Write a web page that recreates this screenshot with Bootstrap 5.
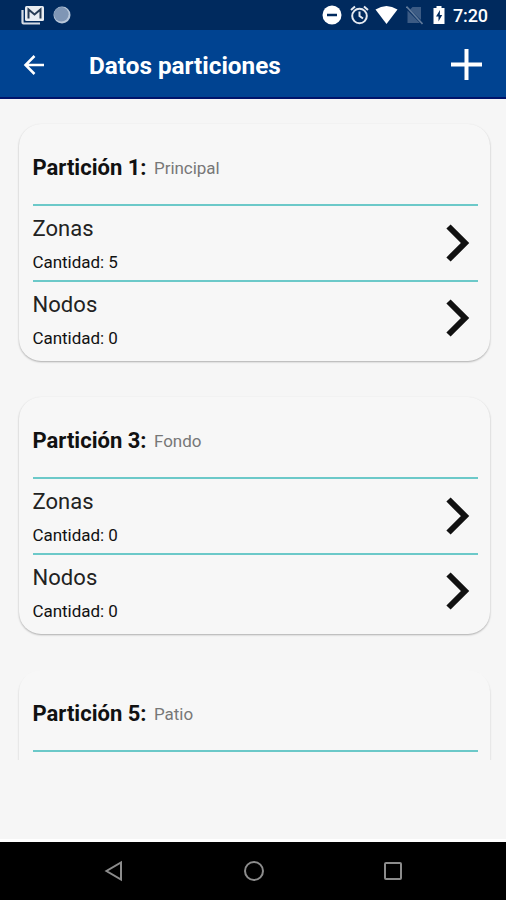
<!DOCTYPE html>
<html lang="es">
<head>
<meta charset="utf-8">
<meta name="viewport" content="width=device-width, initial-scale=1">
<title>Datos particiones</title>
<link href="https://cdn.jsdelivr.net/npm/bootstrap@5.3.0/dist/css/bootstrap.min.css" rel="stylesheet">
<style>
body{font-family:Roboto,"Liberation Sans",sans-serif;background:#f6f6f6;color:#111}
.screen{height:900px}
svg{display:block;flex:none}
.status{height:30px;background:#002a5e;padding:0 18px 0 21px}
.clock{font-size:18px;font-weight:500;line-height:30px;letter-spacing:-.1px;margin-left:8px;padding-top:2px}
.signal{margin-left:6px}
.battery{margin-left:10px}
.topbar{height:69px;background:#004391;border-bottom:2px solid #00146b;padding:2px 24px 0 23px}
.title{font-size:24.3px;font-weight:700;line-height:30px;margin-left:44px;padding-top:3px}
.partitions{height:661px;padding:25px 16px 0 19px}
.partition{height:237px;margin-bottom:36px;padding:0 12px 5px 14px;border-radius:22px;background:#f7f7f7;border:0;box-shadow:0 1px 2px rgba(0,0,0,.3)}
.partition-head{height:80px;padding-top:7px;margin-left:-.5px}
.partition-name{font-size:22px;font-weight:700;line-height:30px}
.partition-label{font-size:17px;color:#777;line-height:30px;margin-left:7.500px;letter-spacing:-.05px}
.partition-faint{box-shadow:0 2px 2px rgba(0,0,0,.22)}
.entry{height:75.5px;border-top:2px solid #6cc9c9;padding-right:7px}
.entry-name{font-size:22px;line-height:30px;padding-top:8px;letter-spacing:.05px;color:#222;margin-left:-.5px}
.entry-count{font-size:17px;line-height:24px;margin-top:6px;letter-spacing:-.05px;margin-left:-.5px}
.navkeys{height:61px;background:#000;padding:0 103px 0 104px;border-top:3px solid #fff}
</style>
<script src="https://cdn.jsdelivr.net/npm/bootstrap@5.3.0/dist/js/bootstrap.bundle.min.js"></script>
</head>
<body>
<div class="screen d-flex flex-column overflow-hidden">
  <div class="status d-flex align-items-center text-white">
    <svg width="24" height="20" viewBox="0 0 24 20"><path d="M1.500 5v12.500q0 1 1 1H19" fill="none" stroke="#d5dce5" stroke-width="2.200"/><rect x="4" y="1" width="19" height="15" rx="1.500" fill="#e9edf2"/><path d="M7.500 13.500V4.500l6 5 6-5v9" fill="none" stroke="#283c55" stroke-width="2"/></svg>
    <svg class="ms-2" width="18" height="18" viewBox="0 0 18 18"><circle cx="9" cy="9" r="8.500" fill="#b9c8da"/><circle cx="8.300" cy="8.300" r="7.300" fill="#7f96b5"/></svg>
    <svg class="ms-auto" width="20" height="20" viewBox="0 0 20 20"><circle cx="10" cy="10" r="9.500" fill="#fff"/><path d="M5 10h10" stroke="#002a5e" stroke-width="2.500"/></svg>
    <svg class="ms-2" width="19" height="20" viewBox="0 0 19 20"><g fill="none" stroke="#e5eaf1" stroke-width="2"><circle cx="9.500" cy="11" r="7.300"/><path d="M9.500 6.500V11l3.500 2.500M1 5l4-3.500M18 5l-4-3.500"/></g></svg>
    <svg class="signal" width="23" height="20" viewBox="0 0 23 20"><path d="M.5 4.500Q11.500-2.500 22.500 4.500L11.500 19Z" fill="#fff"/></svg>
    <svg class="ms-2" width="17" height="20" viewBox="0 0 17 20"><path d="M6.500 2H15v13L4 4.500ZM1.500 5.500 14 18H1.500Z" fill="#3c5b84"/><path d="M.5 1.500 16.500 19" stroke="#627b9b" stroke-width="1.600"/></svg>
    <svg class="battery" width="12" height="20" viewBox="0 0 12 20"><path d="M3.500 1h5v2H11.500v16H.5V3h3Z" fill="#fff"/><path d="M7 5 3 11.500h2.500V16.500L9.200 10H6.800Z" fill="#002a5e"/></svg>
    <span class="clock">7:20</span>
  </div>
  <header class="topbar d-flex align-items-center text-white">
    <svg width="22" height="20" viewBox="0 0 22 20"><path d="M21 10H2.500M11.500 1 2.500 10l9 9" fill="none" stroke="#fff" stroke-width="2.500"/></svg>
    <h1 class="title mb-0">Datos particiones</h1>
    <svg class="ms-auto" width="31" height="31" viewBox="0 0 31 31"><path d="M0 15.500h31M15.500 0v31" stroke="#fff" stroke-width="4"/></svg>
  </header>
  <main class="partitions overflow-hidden">
    <section class="card partition">
      <div class="partition-head d-flex align-items-center"><span class="partition-name">Partición 1:</span><span class="partition-label">Principal</span></div>
      <div class="entry d-flex align-items-center justify-content-between">
        <div class="h-100"><div class="entry-name">Zonas</div><div class="entry-count">Cantidad: 5</div></div>
        <svg width="26" height="38" viewBox="0 0 26 38"><path d="M3.500 2.500 20 19 3.500 35.500" fill="none" stroke="#111" stroke-width="6"/></svg>
      </div>
      <div class="entry d-flex align-items-center justify-content-between">
        <div class="h-100"><div class="entry-name">Nodos</div><div class="entry-count">Cantidad: 0</div></div>
        <svg width="26" height="38" viewBox="0 0 26 38"><path d="M3.500 2.500 20 19 3.500 35.500" fill="none" stroke="#111" stroke-width="6"/></svg>
      </div>
    </section>
    <section class="card partition">
      <div class="partition-head d-flex align-items-center"><span class="partition-name">Partición 3:</span><span class="partition-label">Fondo</span></div>
      <div class="entry d-flex align-items-center justify-content-between">
        <div class="h-100"><div class="entry-name">Zonas</div><div class="entry-count">Cantidad: 0</div></div>
        <svg width="26" height="38" viewBox="0 0 26 38"><path d="M3.500 2.500 20 19 3.500 35.500" fill="none" stroke="#111" stroke-width="6"/></svg>
      </div>
      <div class="entry d-flex align-items-center justify-content-between">
        <div class="h-100"><div class="entry-name">Nodos</div><div class="entry-count">Cantidad: 0</div></div>
        <svg width="26" height="38" viewBox="0 0 26 38"><path d="M3.500 2.500 20 19 3.500 35.500" fill="none" stroke="#111" stroke-width="6"/></svg>
      </div>
    </section>
    <section class="card partition partition-faint mb-0">
      <div class="partition-head d-flex align-items-center"><span class="partition-name">Partición 5:</span><span class="partition-label">Patio</span></div>
      <div class="entry"></div>
    </section>
  </main>
  <nav class="navkeys d-flex align-items-center justify-content-between mt-auto">
    <svg width="20" height="22" viewBox="0 0 20 22"><path d="M17 2.500v17L2.500 11Z" fill="none" stroke="#8c8c8c" stroke-width="2"/></svg>
    <svg width="22" height="22" viewBox="0 0 22 22"><circle cx="11" cy="11" r="9" fill="none" stroke="#8c8c8c" stroke-width="2"/></svg>
    <svg width="20" height="20" viewBox="0 0 20 20"><rect x="2" y="2" width="16" height="16" rx="1" fill="none" stroke="#8c8c8c" stroke-width="2"/></svg>
  </nav>
</div>
</body>
</html>
